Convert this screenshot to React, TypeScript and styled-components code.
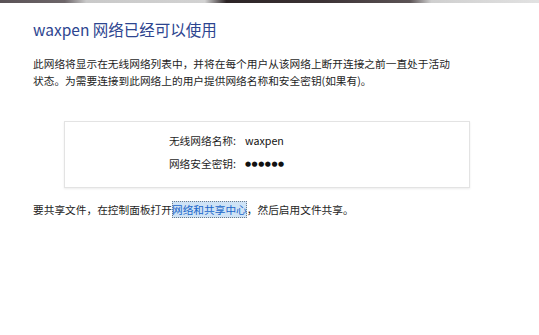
import React from 'react';
import styled, { createGlobalStyle } from 'styled-components';

const GlobalStyle = createGlobalStyle`
    body{
        margin:0;
        background:#ffffff;
        font-family:"Noto Sans CJK SC","Liberation Sans",sans-serif;
    }
`;

const App: React.FC = () => {
    return (
        <Page>
            <GlobalStyle />
            <TopBar />
            <Content>
                <Title>waxpen 网络已经可以使用</Title>
                <Paragraph>
                    此网络将显示在无线网络列表中，并将在每个用户从该网络上断开连接之前一直处于活动
                    <br />
                    状态。为需要连接到此网络上的用户提供网络名称和安全密钥(如果有)。
                </Paragraph>
                <InfoBox>
                    <InfoRow>
                        <Label>无线网络名称:</Label>
                        <Value>waxpen</Value>
                    </InfoRow>
                    <InfoRow>
                        <Label>网络安全密钥:</Label>
                        <Value $dots>●●●●●●</Value>
                    </InfoRow>
                </InfoBox>
                <Paragraph>
                    要共享文件，在控制面板打开<SelLink>网络和共享中心</SelLink>，然后启用文件共享。
                </Paragraph>
            </Content>
        </Page>
    );
};

const Page = styled.div`
    width:539px;
    height:335px;
    overflow:hidden;
    background:#ffffff;
`;

const TopBar = styled.div`
    height:3px;
    background:linear-gradient(90deg,#5a5256 0%,#6d6669 12%,#c9c9c9 16%,#d2d2d2 38%,#2c2426 42%,#3c3335 60%,#5b5355 76%,#cfcfcf 80%,#e2e2e2 100%);
`;

const Content = styled.div`
    padding:15px 0px 0px 33px;
`;

const Title = styled.h1`
    margin:0;
    font-size:15.5px;
    font-weight:400;
    line-height:22px;
    color:#2d4590;
`;

const Paragraph = styled.p`
    margin:15px 0px 0px 0px;
    font-size:10.7px;
    line-height:17px;
    color:#1e1e1e;
    white-space:nowrap;
`;

const InfoBox = styled.div`
    margin:32px 0px 0px 31px;
    width:406px;
    height:67px;
    padding-bottom:5px;
    border:1px solid #e3e3e3;
    box-shadow:0px 1px 2px rgba(0,0,0,0.08);
    display:flex;
    flex-direction:column;
    justify-content:center;
    gap:5px;
    box-sizing:border-box;
    & + p{
        margin-top:13px;
    }
`;

const InfoRow = styled.div`
    display:grid;
    grid-template-columns:171px auto;
    column-gap:9px;
    align-items:center;
    font-size:10.7px;
    line-height:18px;
    color:#1e1e1e;
`;

const Label = styled.span`
    text-align:right;
`;

const Value = styled.span<{ $dots?: boolean }>`
    font-family:${p => p.$dots ? '"DejaVu Sans",sans-serif' : '"Noto Sans CJK SC","Liberation Sans",sans-serif'};
    font-size:${p => p.$dots ? '7px' : '10.7px'};
    letter-spacing:${p => p.$dots ? '0.5px' : '0px'};
    color:#111111;
`;

const SelLink = styled.span`
    background:#cfe3f6;
    color:#1a66c9;
    outline:1px dotted #6a7a8a;
    outline-offset:-1px;
    padding:1px 0px;
`;

export default App;
